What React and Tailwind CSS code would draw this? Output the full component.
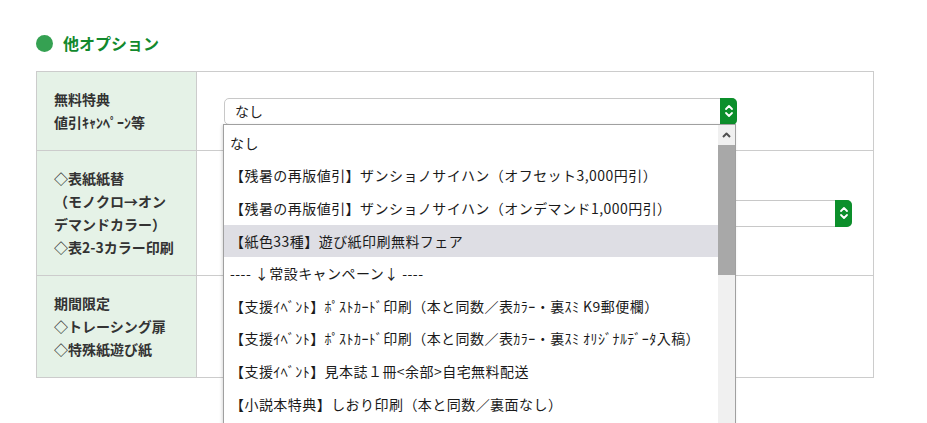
import React from "react";

const options = [
  "なし",
  "【残暑の再版値引】ザンショノサイハン（オフセット3,000円引）",
  "【残暑の再版値引】ザンショノサイハン（オンデマンド1,000円引）",
  "【紙色33種】遊び紙印刷無料フェア",
  "---- ↓常設キャンペーン↓ ----",
  "【支援ｲﾍﾞﾝﾄ】ﾎﾟｽﾄｶｰﾄﾞ印刷（本と同数／表ｶﾗｰ・裏ｽﾐ K9郵便欄）",
  "【支援ｲﾍﾞﾝﾄ】ﾎﾟｽﾄｶｰﾄﾞ印刷（本と同数／表ｶﾗｰ・裏ｽﾐ ｵﾘｼﾞﾅﾙﾃﾞｰﾀ入稿）",
  "【支援ｲﾍﾞﾝﾄ】見本誌１冊<余部>自宅無料配送",
  "【小説本特典】しおり印刷（本と同数／裏面なし）",
];

function Arrows() {
  return (
    <svg width="10" height="14" viewBox="0 0 10 14" fill="none" stroke="white" strokeWidth="1.8" strokeLinecap="round" strokeLinejoin="round">
      <polyline points="2,5 5,2 8,5" />
      <polyline points="2,9 5,12 8,9" />
    </svg>
  );
}

function SelectBox({ width, value }) {
  return (
    <div className={`${width} h-[27px] flex border border-[#c8c8c8] rounded-[5px] bg-white`}>
      <div className="flex-1 flex items-center pl-[10px] text-[14px] text-[#222]">{value}</div>
      <div className="w-[17px] -my-px -mr-px flex items-center justify-center bg-[#0c8f2b] rounded-r-[5px]">
        <Arrows />
      </div>
    </div>
  );
}

function Label({ lines }) {
  return (
    <div className="w-[160px] shrink-0 border-r border-[#cccccc] bg-[#e5f2e7] flex items-center pl-[17px]">
      <div className="text-[14px] font-bold leading-[23px] text-[#333] whitespace-nowrap">
        {lines.map((l, i) => (
          <div key={i}>{l}</div>
        ))}
      </div>
    </div>
  );
}

export default function App() {
  return (
    <div className="relative w-[927px] h-[423px] overflow-hidden bg-white font-['Noto_Sans_CJK_JP','Noto_Sans',sans-serif]">
      <div className="pl-[36px] pt-[33px]">
        <div className="h-[20px] flex items-center gap-[10px] mb-[18px]">
          <div className="w-[17px] h-[17px] rounded-full bg-[#35a152]" />
          <h2 className="text-[16px] font-bold text-[#12892d]">他オプション</h2>
        </div>

        <div className="w-[838px] border border-[#cccccc]">
          <div className="flex h-[79px] border-b border-[#cccccc]">
            <Label lines={["無料特典", "値引ｷｬﾝﾍﾟｰﾝ等"]} />
            <div className="flex-1 flex items-center pl-[27px]">
              <SelectBox width="w-[513px]" value="なし" />
            </div>
          </div>
          <div className="flex h-[125px] border-b border-[#cccccc]">
            <Label lines={["◇表紙紙替", "（モノクロ→オン", "デマンドカラー）", "◇表2-3カラー印刷"]} />
            <div className="flex-1 flex items-center pl-[27px]">
              {/* value hidden behind the open list */}
              <SelectBox width="w-[628px]" value="" />
            </div>
          </div>
          <div className="flex h-[101px]">
            <Label lines={["期間限定", "◇トレーシング扉", "◇特殊紙遊び紙"]} />
            <div className="flex-1" />
          </div>
        </div>
      </div>

      {/* open dropdown list */}
      <div className="absolute left-[223px] top-[124px] w-[513px] h-[330px] flex border border-[#a0a0a0] bg-white shadow-[-1px_1px_3px_rgba(0,0,0,0.15)]">
        <div className="flex-1 pt-[2px]">
          {options.map((o, i) => (
            <div
              key={i}
              className={`h-[32.6px] flex items-center pl-[6px] text-[14px] tracking-[0.45px] text-[#1a1a1a] whitespace-nowrap ${i === 3 ? "bg-[#dedee4]" : ""}`}
            >
              {o}
            </div>
          ))}
        </div>
        <div className="w-[17px] flex flex-col bg-[#f0f0f0]">
          <div className="h-[20px] flex items-center justify-center">
            <svg width="9" height="6" viewBox="0 0 9 6" fill="none" stroke="#505050" strokeWidth="2" strokeLinejoin="round">
              <polyline points="1,5 4.5,1.5 8,5" />
            </svg>
          </div>
          <div className="h-[130px] bg-[#a8a8a8]" />
        </div>
      </div>
    </div>
  );
}
